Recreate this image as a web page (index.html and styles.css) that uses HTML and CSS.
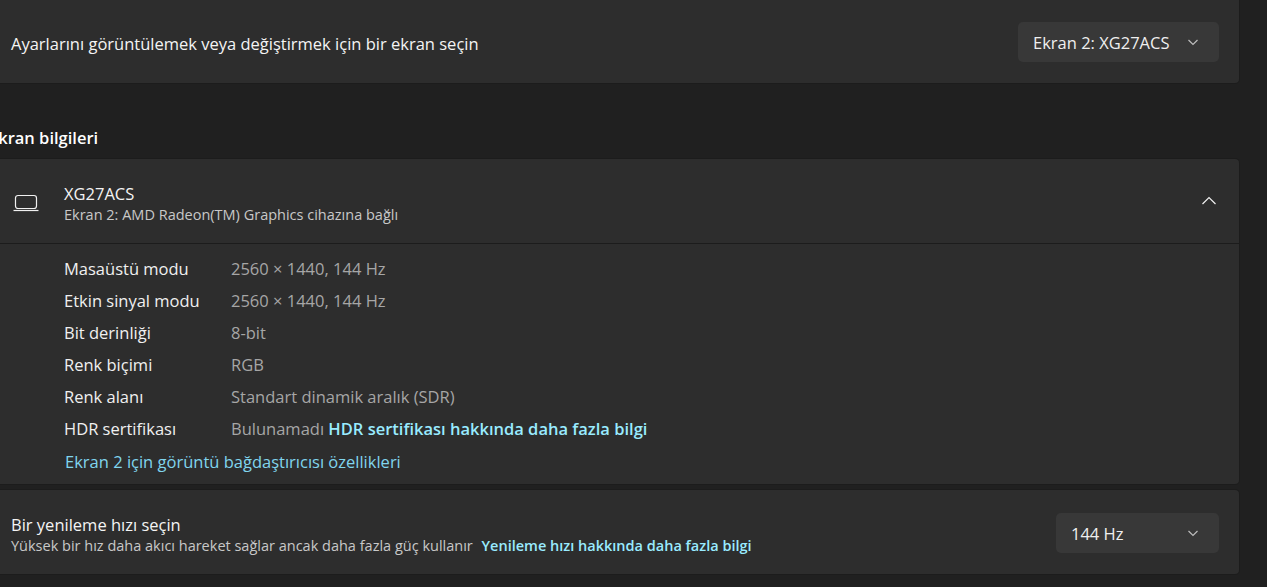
FILE: index.html

```html
<!DOCTYPE html>
<html lang="tr">
<head>
  <meta charset="UTF-8">
  <title>Gelişmiş ekran</title>
  <link rel="stylesheet" href="styles.css">
</head>
<body>
  <div class="page">
    <div class="card row first">
      <div class="row-text">
        <div class="title">Ayarlarını görüntülemek veya değiştirmek için bir ekran seçin</div>
      </div>
      <div class="select select-wide">
        <span>Ekran 2: XG27ACS</span>
        <svg class="chev" width="12" height="12" viewBox="0 0 12 12"><path d="M1.500 4l4.500 4.500L10.500 4"/></svg>
      </div>
    </div>

    <h2 class="section">Ekran bilgileri</h2>

    <div class="card info">
      <div class="info-head">
        <svg class="laptop" width="28" height="28" viewBox="0 0 28 28"><rect x="3.500" y="6.500" width="21" height="13" rx="2.500"/><path d="M1.500 21.500h25"/></svg>
        <div class="info-name">
          <div class="title">XG27ACS</div>
          <div class="sub">Ekran 2: AMD Radeon(TM) Graphics cihazına bağlı</div>
        </div>
        <svg class="chev-up" width="16" height="16" viewBox="0 0 16 16"><path d="M1.500 11L8 4.500 14.500 11"/></svg>
      </div>
      <div class="info-body">
        <div class="spec"><span class="key">Masaüstü modu</span><span class="val">2560 × 1440, 144 Hz</span></div>
        <div class="spec"><span class="key">Etkin sinyal modu</span><span class="val">2560 × 1440, 144 Hz</span></div>
        <div class="spec"><span class="key">Bit derinliği</span><span class="val">8-bit</span></div>
        <div class="spec"><span class="key">Renk biçimi</span><span class="val">RGB</span></div>
        <div class="spec"><span class="key">Renk alanı</span><span class="val">Standart dinamik aralık (SDR)</span></div>
        <div class="spec"><span class="key">HDR sertifikası</span><span class="val">Bulunamadı <a class="strong-link">HDR sertifikası hakkında daha fazla bilgi</a></span></div>
        <a class="adapter-link">Ekran 2 için görüntü bağdaştırıcısı özellikleri</a>
      </div>
    </div>

    <div class="card row rate">
      <div class="row-text">
        <div class="title">Bir yenileme hızı seçin</div>
        <div class="sub">Yüksek bir hız daha akıcı hareket sağlar ancak daha fazla güç kullanır <a class="small-link">Yenileme hızı hakkında daha fazla bilgi</a></div>
      </div>
      <div class="select select-narrow">
        <span>144 Hz</span>
        <svg class="chev" width="12" height="12" viewBox="0 0 12 12"><path d="M1.500 4l4.500 4.500L10.500 4"/></svg>
      </div>
    </div>
  </div>
</body>
</html>
```

FILE: styles.css

```css
html, body {
  height: 100%;
  overflow: hidden;
}
body {
  margin: 0;
  background: #202020;
  color: #fff;
  font-family: "Open Sans", "Noto Sans", sans-serif;
  font-size: 16.500px;
}
.page {
  margin: 0 28px 0 -10px;
}
.card {
  background: #2d2d2d;
  border-radius: 4px;
  box-shadow: 0 0 0 1px #1c1c1c;
}
.row {
  display: flex;
  align-items: center;
  justify-content: space-between;
  height: 84px;
  padding: 0 20px 0 21px;
  box-sizing: border-box;
}
.first {
  height: 83px;
  padding-top: 1px;
  border-radius: 0 0 4px 4px;
}
.first .title {
  margin-top: 3px;
}
.title {
  font-size: 16.500px;
  line-height: 20px;
  color: #f4f4f4;
}
.sub {
  margin-top: 1px;
  font-size: 14.500px;
  line-height: 20px;
  color: #c8c8c8;
}
.select {
  display: flex;
  align-items: center;
  justify-content: space-between;
  height: 40px;
  box-sizing: border-box;
  padding: 0 20px 0 15px;
  background: #383838;
  border-radius: 5px;
  font-size: 16.500px;
  color: #efefef;
}
.select-wide {
  width: 201px;
}
.select-narrow {
  width: 163px;
}
.chev path, .chev-up path {
  fill: none;
  stroke-width: 1.200;
}
.chev path {
  stroke: #bdbdbd;
}
.chev-up path {
  stroke: #f0f0f0;
}
.section {
  margin: 44px 0 10px -1px;
  font-size: 16.500px;
  font-weight: 600;
  line-height: 22px;
  color: #fff;
}
.info-head {
  display: flex;
  align-items: center;
  height: 84px;
  padding: 0 22px 0 22px;
  border-bottom: 1px solid #1c1c1c;
}
.laptop {
  flex: none;
  margin-right: 24px;
  margin-top: 4px;
}
.laptop rect, .laptop path {
  fill: none;
  stroke: #f0f0f0;
  stroke-width: 1.200;
}
.info-name {
  flex: 1;
  margin-top: 7px;
}
.info-body {
  padding: 8px 21px 6px 74px;
}
.spec {
  display: flex;
  height: 32px;
  align-items: center;
}
.key {
  width: 167px;
  color: #f0f0f0;
}
.val {
  color: #a6a6a6;
}
.strong-link, .small-link {
  color: #99ebff;
  font-weight: 600;
}
.small-link {
  margin-left: 5px;
}
.adapter-link {
  display: block;
  height: 34px;
  line-height: 36px;
  margin-left: 1px;
  color: #80d5ee;
}
.rate {
  margin-top: 6px;
  padding-top: 2px;
}
.rate .row-text {
  margin-top: 5px;
}
```
